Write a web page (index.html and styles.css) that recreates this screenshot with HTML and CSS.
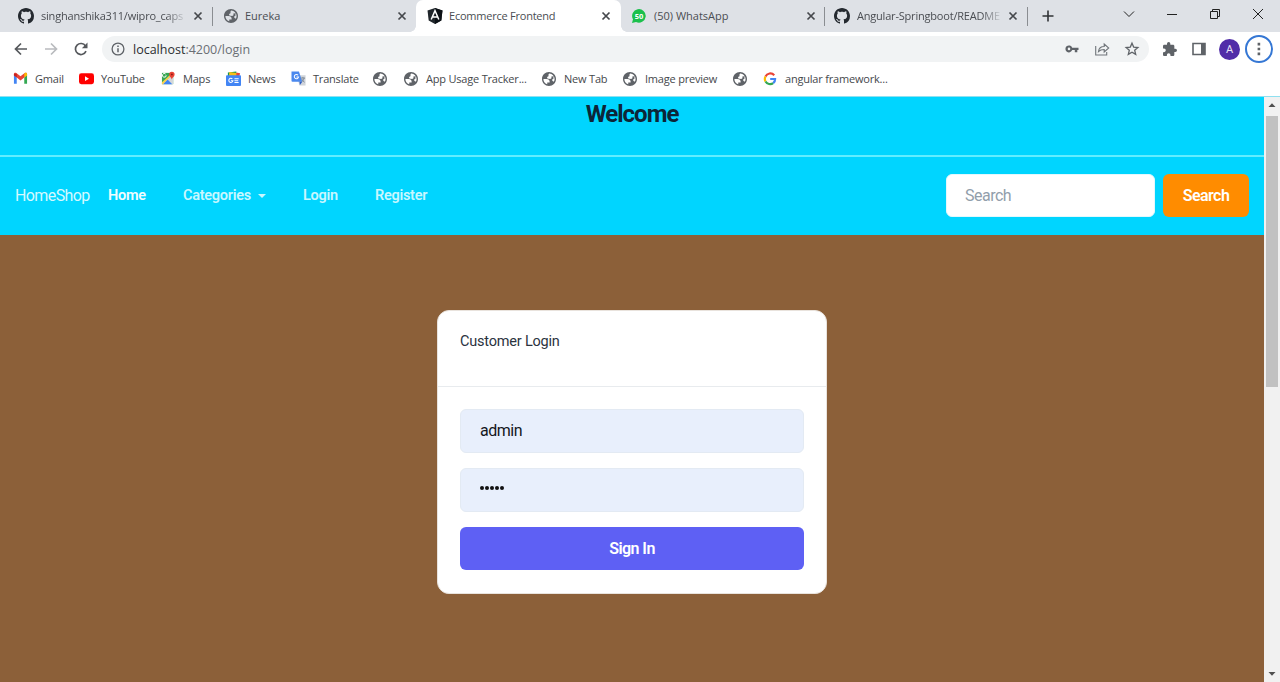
FILE: index.html
```html
<!DOCTYPE html>
<html lang="en">
<head>
<meta charset="utf-8">
<title>Ecommerce Frontend</title>
<link rel="stylesheet" href="styles.css">
</head>
<body>
<svg class="defs" aria-hidden="true">
  <symbol id="github" viewBox="0 0 16 16"><path d="M8 0C3.58 0 0 3.58 0 8c0 3.54 2.29 6.53 5.47 7.59.4.07.55-.17.55-.38 0-.19-.01-.82-.01-1.49-2.01.37-2.53-.49-2.69-.94-.09-.23-.48-.94-.82-1.13-.28-.15-.68-.52-.01-.53.63-.01 1.08.58 1.23.82.72 1.21 1.87.87 2.33.66.07-.52.28-.87.51-1.07-1.78-.2-3.64-.89-3.64-3.95 0-.87.31-1.59.82-2.15-.08-.2-.36-1.02.08-2.12 0 0 .67-.21 2.2.82.64-.18 1.32-.27 2-.27s1.36.09 2 .27c1.53-1.04 2.2-.82 2.2-.82.44 1.1.16 1.92.08 2.12.51.56.82 1.27.82 2.15 0 3.07-1.87 3.75-3.65 3.95.29.25.54.73.54 1.48 0 1.07-.01 1.93-.01 2.2 0 .21.15.46.55.38A8.01 8.01 0 0 0 16 8c0-4.42-3.58-8-8-8z" fill="#24292f"/></symbol>
  <symbol id="globe" viewBox="2 2 20 20"><path d="M12 2C6.48 2 2 6.48 2 12s4.48 10 10 10 10-4.48 10-10S17.520 2 12 2zM4 12h4.400c3.400.020 4.900 1.730 4.500 5.120H9.500v2.480A8 8 0 0 1 4 12zm14.300-4.900c-.300.900-1 1.400-1.800 1.400h-1.200c0 .700.300 1.300.300 1.700 0 1.200-.800 1.500-2.100 1.800-2.300 0-4.300-.300-4.300-2 0-1.300 1-1.700 2.100-2.100V5.700c0-.700.500-1.300 1.100-1.600A8 8 0 0 1 20 12c0 1.300-.3 2.500-.9 3.600-1.700-.1-2.600-1-2.600-2.200 0-1.100.8-1.800 1.900-1.900z" fill="#5f6368" fill-rule="evenodd"/></symbol>
  <symbol id="close" viewBox="0 0 10 10"><path d="M1.500 1.500l7 7m0-7l-7 7" stroke="#45484c" stroke-width="1.700"/></symbol>
</svg>

<div class="tabstrip">
  <div class="tab"><svg class="fav"><use href="#github"/></svg><span class="label fade">singhanshika311/wipro_caps</span><svg class="x"><use href="#close"/></svg></div>
  <div class="tab sep"><svg class="fav globe"><use href="#globe"/></svg><span class="label">Eureka</span><svg class="x"><use href="#close"/></svg></div>
  <div class="tab active"><svg class="fav" viewBox="0 0 16 16"><path d="M8 0l7.500 2.600-1.200 9.900L8 16l-6.300-3.500L.5 2.600z" fill="#20262b"/><path d="M8 0v16l6.300-3.500 1.200-9.900z" fill="#0c1116"/><path d="M4.200 11.500L8 2.700l3.800 8.800M5.700 9h4.600" fill="none" stroke="#fff" stroke-width="1.500"/></svg><span class="label tight">Ecommerce Frontend</span><svg class="x"><use href="#close"/></svg></div>
  <div class="tab wtab"><svg class="fav" viewBox="0 0 16 16"><path d="M1 15l1-3.800A6.800 6.800 0 1 1 5 14z" fill="#1bc04c"/><text x="8" y="10.800" class="badge">50</text></svg><span class="label">(50) WhatsApp</span><svg class="x"><use href="#close"/></svg></div>
  <div class="tab sep last"><svg class="fav"><use href="#github"/></svg><span class="label fade">Angular-Springboot/READM&#69;</span><svg class="x"><use href="#close"/></svg></div>
  <svg class="plus" viewBox="0 0 12 12"><path d="M6 .5v11M.5 6h11" stroke="#303336" stroke-width="1.600"/></svg>
  <div class="wincontrols">
    <svg viewBox="0 0 12 12"><path d="M1 3.500l5 5 5-5" class="thin"/></svg>
    <svg viewBox="0 0 12 12"><path d="M1 6.500h10" class="thin"/></svg>
    <svg viewBox="0 0 12 12"><path d="M1.500 3.500h7v7h-7zM3.500 3.500v-2h7v7h-2" class="thin"/></svg>
    <svg viewBox="0 0 12 12"><path d="M1 1l10 10M11 1L1 11" class="thin"/></svg>
  </div>
</div>

<div class="toolbar">
  <svg class="nav-ic" viewBox="0 0 14 14"><path d="M13 7H1.500M7 1.500L1.500 7 7 12.500" fill="none" stroke="#55585c" stroke-width="1.700"/></svg>
  <svg class="nav-ic" viewBox="0 0 14 14"><path d="M1 7h11.500M7 1.500L12.500 7 7 12.500" fill="none" stroke="#b9bbbe" stroke-width="1.700"/></svg>
  <svg class="nav-ic" viewBox="0 0 14 14"><path d="M12 9.200A5.500 5.500 0 1 1 11.500 3.900" fill="none" stroke="#55585c" stroke-width="1.700"/><path d="M13.500.6v5.600H7.900z" fill="#55585c"/></svg>
  <div class="omnibox">
    <svg class="info" viewBox="0 0 14 14"><circle cx="7" cy="7" r="5.900" fill="none" stroke="#5f6368" stroke-width="1.300"/><path d="M7 6.200v4M7 3.500v1.600" stroke="#5f6368" stroke-width="1.500"/></svg>
    <span class="url"><b>localhost</b>:4200/login</span>
    <div class="omni-actions">
      <svg viewBox="0 0 16 16"><path fill-rule="evenodd" d="M8.200 6.700A3.500 3.500 0 1 0 8.200 9.100H10.800v2.100h2.500V9.100H14.500V6.700zM5 6.600a1.300 1.300 0 1 1 0 2.600 1.300 1.300 0 0 1 0-2.600z" fill="#5f6368"/></svg>
      <svg viewBox="0 0 16 16"><path d="M1.700 5v9h11v-3M4.500 10.500c.4-3.500 2-5 5.700-5V3l4.500 4-4.500 4V8.500c-2.500 0-4.200.4-5.700 2z" fill="none" stroke="#70757a" stroke-width="1.100"/></svg>
      <svg viewBox="0 0 16 16"><path d="M8 2.200l1.700 3.900 4.200.4-3.200 2.800 1 4.100L8 11.300l-3.700 2.100 1-4.100-3.200-2.800 4.200-.4z" fill="none" stroke="#5f6368" stroke-width="1.300"/></svg>
    </div>
  </div>
  <svg class="ext" viewBox="2 1 21 21"><path d="M20.500 11H19V7c0-1.100-.9-2-2-2h-4V3.500a2.500 2.500 0 0 0-5 0V5H4c-1.100 0-2 .9-2 2v3.800h1.500a2.700 2.700 0 0 1 0 5.400H2V20c0 1.100.9 2 2 2h3.800v-1.500a2.700 2.700 0 0 1 5.400 0V22H17c1.100 0 2-.9 2-2v-4h1.500a2.500 2.500 0 0 0 0-5z" fill="#5f6368"/></svg>
  <svg class="panel" viewBox="0 0 14 14"><path d="M1 1.500h12v11H1z" fill="none" stroke="#5f6368" stroke-width="1.600"/><path d="M9 1.500h4v11H9z" fill="#5f6368"/></svg>
  <div class="avatar">A</div>
  <div class="menu"><svg viewBox="0 0 4 14"><path d="M.6 .8h2.600v2.600H.6zM.6 5.700h2.600v2.600H.6zM.6 10.600h2.600v2.600H.6z" fill="#5f6368"/></svg></div>
</div>

<div class="bookmarks">
  <div class="bm"><svg viewBox="0 0 16 16"><path d="M1 4v9.500h3V7z" fill="#4285f4"/><path d="M15 4v9.500h-3V7z" fill="#34a853"/><path d="M1 4.500V3.200c0-1.300 1.500-1.700 2.500-1L8 5.700l4.500-3.500c1-.7 2.500-.3 2.500 1v1.300L8 10z" fill="#ea4335"/><path d="M12 3v4l3-2.300V3.200c0-1.200-1.500-1.700-2.500-1z" fill="#fbbc04"/><path d="M1 3v1.800L4 7V3z" fill="#c5221f"/></svg><span>Gmail</span></div>
  <div class="bm"><svg viewBox="0 0 16 16"><rect y="2.500" width="16" height="11.500" rx="2.500" fill="#f00"/><path d="M6.400 5.700v5l4.300-2.500z" fill="#fff"/></svg><span>YouTube</span></div>
  <div class="bm"><svg viewBox="0 0 16 16"><path d="M1 2h12v12H1z" fill="#37a653"/><path d="M1 14L13 3v11z" fill="#d3d6da"/><path d="M2 14l5-5 5 5z" fill="#4285f4"/><path d="M1 12L12 2l1 1L2 14H1z" fill="#fbd04b"/><path d="M5.500 4.500a2 2 0 1 1-.6-1.300" fill="none" stroke="#fff"/><path d="M11.500 9C11 6.500 8.700 6 8.700 3.600a2.900 2.900 0 0 1 5.800 0C14.500 6 12 6.500 11.500 9z" fill="#ea4335"/><circle cx="11.600" cy="3.600" r="1" fill="#8c1c13"/></svg><span>Maps</span></div>
  <div class="bm"><svg viewBox="0 0 16 16"><path d="M2 1.500l9-1v5H2z" fill="#16964b"/><path d="M3.500 1l10 1.500-1 5H3z" fill="#f9bd16"/><path d="M11 1.500l4 1-1 4-3-1z" fill="#ea4335"/><rect x="0" y="4.500" width="16" height="11.500" rx="1" fill="#4285f4"/><path d="M6.800 8.500a2.200 2.200 0 1 0 .6 1.800H5.300M9 8.300h4.500M9 10.300h4M9 12.300h4.500" fill="none" stroke="#fff" stroke-width="1.100"/></svg><span>News</span></div>
  <div class="bm"><svg viewBox="0 0 16 16"><path d="M6 4.500h9.500v11H9z" fill="#d0d4da"/><path d="M.5.500h8l3.500 11H1.500a1 1 0 0 1-1-1z" fill="#4a88ee"/><path d="M9 11.500h3L9.500 15z" fill="#2c5bc0"/><path d="M7.600 4.500a2.300 2.300 0 1 0 .5 1.900H5.800" fill="none" stroke="#fff" stroke-width="1.100"/><path d="M10.500 7.500H15M12.700 6.500v1M14 7.500c-.5 2-1.500 3-2.500 4M11.500 8.500c.5 1.500 1.500 2.500 3 3.500" fill="none" stroke="#77818f" stroke-width=".9"/></svg><span>Translate</span></div>
  <div class="bm"><svg class="globe"><use href="#globe"/></svg></div>
  <div class="bm"><svg class="globe"><use href="#globe"/></svg><span>App Usage Tracker...</span></div>
  <div class="bm"><svg class="globe"><use href="#globe"/></svg><span>New Tab</span></div>
  <div class="bm"><svg class="globe"><use href="#globe"/></svg><span>Image preview</span></div>
  <div class="bm"><svg class="globe"><use href="#globe"/></svg></div>
  <div class="bm"><svg class="globe" viewBox="0 0 14 14" fill="none" stroke-width="2.200"><path d="M11.200 3.200A5.300 5.300 0 0 0 2.500 4.500" stroke="#ea4335"/><path d="M2.500 4.500a5.300 5.300 0 0 0 0 5" stroke="#fbbc05"/><path d="M2.500 9.500a5.300 5.300 0 0 0 7.700 1.600" stroke="#34a853"/><path d="M10.200 11.100a5 5 0 0 0 1.900-4.100H7.200" stroke="#4285f4"/></svg><span>angular framework...</span></div>
</div>

<div class="viewport">
  <main class="page">
    <header class="banner"><h1>Welcome</h1></header>
    <nav class="navbar">
      <a class="brand">HomeShop</a>
      <a class="link home">Home</a>
      <a class="link cat">Categories</a>
      <a class="link login">Login</a>
      <a class="link">Register</a>
      <form class="search">
        <input type="text" placeholder="Search">
        <button type="button">Search</button>
      </form>
    </nav>
    <section class="card">
      <div class="card-head">Customer Login</div>
      <form class="card-body">
        <div class="field">admin</div>
        <div class="field dots"><i></i><i></i><i></i><i></i><i></i></div>
        <button type="button">Sign In</button>
      </form>
    </section>
  </main>
  <aside class="scrollbar">
    <svg viewBox="0 0 8 4"><path d="M.5 4L4 .2 7.500 4z" fill="#505050"/></svg>
    <div class="thumb"></div>
    <svg class="down" viewBox="0 0 8 4"><path d="M.5 0L4 3.800 7.500 0z" fill="#505050"/></svg>
  </aside>
</div>
</body>
</html>
```

FILE: styles.css
```css
* { box-sizing: border-box; }
body {
  margin: 0;
  width: 1280px;
  height: 682px;
  overflow: hidden;
  display: flex;
  flex-direction: column;
  background: #fff;
  font-family: "Open Sans", "Noto Sans", sans-serif;
}
svg { display: block; flex: none; }
.defs { position: absolute; width: 0; height: 0; }

/* Tab strip */
.tabstrip {
  height: 32px;
  flex: none;
  background: #dee1e6;
  display: flex;
  align-items: center;
  padding-left: 8px;
}
.tab {
  width: 204px;
  height: 32px;
  display: flex;
  align-items: center;
  padding: 0 9px 0 10px;
  position: relative;
}
.tab .fav { width: 16px; height: 16px; margin-right: 7px; }
.tab .fav.globe { width: 14px; height: 14px; margin: 0 7px 0 2px; }
.tab .x { width: 10px; height: 10px; margin-left: auto; }
.label {
  font-size: 11px;
  line-height: 16px;
  color: #4a4d52;
  white-space: nowrap;
}
.tight { letter-spacing: -0.23px; }
.fade {
  width: 145px;
  letter-spacing: -0.2px;
  -webkit-mask-image: linear-gradient(90deg, #000 125px, transparent 146px);
  mask-image: linear-gradient(90deg, #000 125px, transparent 146px);
}
.sep::before, .last::after {
  content: "";
  position: absolute;
  left: 0;
  top: 7px;
  width: 1px;
  height: 19px;
  background: #8a8d91;
}
.wtab { width: 203px; padding-right: 8px; }
.last { width: 203px; }
.last::after { left: auto; right: -1px; }
.active {
  width: 205px;
  padding: 0 10px 0 11px;
  background: #fff;
  border-radius: 7px 7px 0 0;
}
.tab.active .fav { margin-right: 6px; }
.active::before, .active::after {
  content: "";
  position: absolute;
  bottom: 0;
  width: 6px;
  height: 6px;
}
.active::before { left: -6px; background: radial-gradient(circle at 0 0, transparent 5.500px, #fff 6px); }
.active::after { right: -6px; background: radial-gradient(circle at 100% 0, transparent 5.500px, #fff 6px); }
.badge { font: bold 7.500px "Open Sans", sans-serif; fill: #fff; text-anchor: middle; }
.plus { width: 12px; height: 12px; margin-left: 15px; }
.wincontrols {
  display: flex;
  gap: 31px;
  margin-left: auto;
  padding: 0 16px 5px 0;
}
.wincontrols svg { width: 12px; height: 12px; }
.thin { fill: none; stroke: #222; stroke-width: 1; }

/* Toolbar */
.toolbar {
  height: 34px;
  flex: none;
  display: flex;
  align-items: center;
  padding-left: 14px;
}
.nav-ic { width: 14px; height: 14px; margin-right: 16px; }
.omnibox {
  width: 1047px;
  height: 26px;
  margin-left: -2px;
  border-radius: 13px;
  background: #f1f3f4;
  display: flex;
  align-items: center;
  padding: 0 9px;
}
.info { width: 14px; height: 14px; }
.url { margin-left: 8px; font-size: 12.500px; color: #6b6f74; }
.url b { font-weight: 400; color: #2b2e31; }
.omni-actions { margin-left: auto; display: flex; gap: 14px; }
.omni-actions svg { width: 16px; height: 16px; }
.ext { width: 14px; height: 14px; margin-left: 14px; }
.panel { width: 14px; height: 14px; margin-left: 15px; }
.avatar {
  width: 21px;
  height: 21px;
  margin-left: 13px;
  border-radius: 50%;
  background: #512da8;
  color: #e9e4f6;
  font: 11px/21px Roboto, sans-serif;
  text-align: center;
}
.menu {
  width: 28px;
  height: 28px;
  margin-left: 5px;
  border: 2px solid #3577d4;
  border-radius: 50%;
  display: grid;
  place-items: center;
}
.menu svg { width: 4px; height: 14px; }

/* Bookmarks */
.bookmarks {
  height: 31px;
  flex: none;
  border-bottom: 1px solid #8fe0f0;
  padding: 0 0 5px 13px;
  display: grid;
  grid-template-columns: 66px 82px 65px 65px 82px 31px 138px 81px 110px 30px 150px;
  align-items: center;
}
.bm {
  display: flex;
  align-items: center;
  font-size: 11px;
  letter-spacing: -0.2px;
  color: #45484c;
  white-space: nowrap;
}
.bm svg { width: 15px; height: 15px; margin-right: 7px; }
.bm svg.globe { width: 14px; height: 14px; margin-right: 8px; }

/* Web page */
.viewport { flex: 1; display: flex; min-height: 0; }
.page {
  width: 1264px;
  background: #8c6039;
  font-family: Roboto, "Open Sans", sans-serif;
}
.banner {
  height: 60px;
  background: #00d5ff;
  border-bottom: 2px solid #62edff;
}
.banner h1 {
  margin: 0;
  padding-top: 3px;
  font-size: 24px;
  line-height: 28px;
  font-weight: 700;
  letter-spacing: -1px;
  text-align: center;
  color: #0c2638;
}
.navbar {
  height: 78px;
  background: #00d5ff;
  display: flex;
  align-items: center;
  padding: 0 15px 1px;
  color: #c8f7ff;
}
.brand { font-size: 16px; letter-spacing: -0.6px; width: 93px; color: #d5f9ff; }
.link { font-size: 14.500px; font-weight: 600; letter-spacing: -0.28px; }
.home { width: 75px; color: #f0fdff; }
.cat { width: 120px; display: flex; align-items: center; gap: 7px; }
.cat::after {
  content: "";
  border: 4px solid transparent;
  border-top-color: currentColor;
  border-bottom: 0;
}
.login { width: 72px; }
.search { margin-left: auto; display: flex; gap: 8px; }
.search input {
  width: 209px;
  height: 43px;
  padding: 0 18px;
  border: 1px solid #e3f8fd;
  border-radius: 6px;
  background: #fff;
  font: 16px Roboto, sans-serif;
  letter-spacing: -0.5px;
}
.search input::placeholder { color: #919eab; opacity: 1; }
button {
  height: 43px;
  border: 0;
  border-radius: 6px;
  color: #fff;
  font: 600 16px Roboto, sans-serif;
  letter-spacing: -0.55px;
}
.search button { width: 86px; background: #ff8c00; }
.card {
  width: 390px;
  height: 284px;
  margin: 75px auto 0;
  background: #fff;
  border: 1px solid #e9e3dd;
  border-radius: 12px;
}
.card-head {
  height: 76px;
  padding: 22px 22px 0;
  border-bottom: 1px solid #e8ebee;
  font-size: 14.500px;
  letter-spacing: -0.2px;
  line-height: 18px;
  color: #2b3340;
}
.card-body { padding: 22px 22px 0; display: flex; flex-direction: column; gap: 15px; }
.field {
  height: 44px;
  padding: 0 19px;
  border: 1px solid #e3eaf3;
  border-radius: 6px;
  background: #e8effc;
  font-size: 16px;
  letter-spacing: -0.5px;
  line-height: 41px;
  color: #14171c;
}
.dots { display: flex; align-items: center; gap: 1px; padding-bottom: 4px; }
.dots i { width: 4px; height: 4px; border-radius: 50%; background: #111; }
.card-body button { background: #5e60f4; }
.scrollbar {
  width: 16px;
  background: #f1f1f1;
  display: flex;
  flex-direction: column;
  align-items: center;
  padding: 6px 0 6px;
}
.scrollbar svg { width: 8px; height: 4px; }
.thumb { width: 12px; height: 271px; margin-top: 9px; background: #c1c1c1; }
.down { margin-top: auto; }
```
